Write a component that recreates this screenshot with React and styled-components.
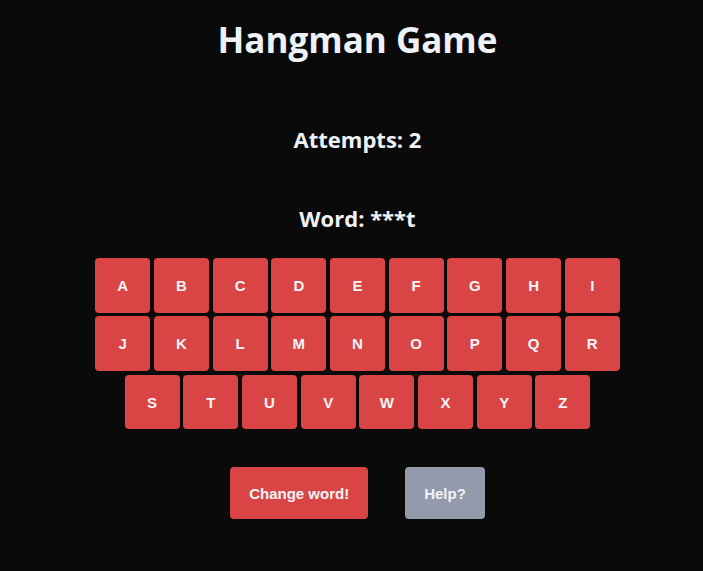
import React from "react";
import styled, { createGlobalStyle } from "styled-components";

const Global = createGlobalStyle`
  html, body {
    margin: 0;
    background: #0b0a0b;
  }
  #root {
    min-height: 571px;
  }
`;

const Page = styled.main`
  display: flex;
  flex-direction: column;
  align-items: center;
  padding-left: 12px;
  color: #eef2f7;
  font-family: "Open Sans", "Noto Sans", sans-serif;
`;

const Title = styled.h1`
  margin: 18px 0 0;
  font-size: 35px;
  line-height: 44px;
  font-weight: 700;
`;

const Info = styled.h2`
  margin: ${(p) => p.$top}px 0 0;
  font-size: 22px;
  line-height: 30px;
  font-weight: 700;
`;

const Keyboard = styled.div`
  display: flex;
  flex-direction: column;
  align-items: center;
  gap: 3.7px;
  margin-top: 25px;
`;

const KeyRow = styled.div`
  display: flex;
  gap: 3.7px;
`;

const Key = styled.button`
  width: 55px;
  height: 54.7px;
  border: none;
  border-radius: 4px;
  background: #d94545;
  color: #f4f4f6;
  font-family: "Liberation Sans", Arial, sans-serif;
  font-size: 15px;
  font-weight: 700;
  padding: 0;
  cursor: pointer;
`;

const Actions = styled.div`
  display: flex;
  gap: 37px;
  margin-top: 38px;
`;

const ActionButton = styled.button`
  height: 52px;
  padding: 0 19px;
  border: none;
  border-radius: 4px;
  background: ${(p) => (p.$muted ? "#929aac" : "#d94545")};
  color: #f4f4f6;
  font-family: "Liberation Sans", Arial, sans-serif;
  font-size: 15px;
  font-weight: 700;
  cursor: pointer;
`;

const rows = ["ABCDEFGHI", "JKLMNOPQR", "STUVWXYZ"];

export default function App() {
  return (
    <>
      <Global />
      <Page>
        <Title>Hangman Game</Title>
        <Info $top={62}>Attempts: 2</Info>
        <Info $top={49}>Word: ***t</Info>
        <Keyboard>
          {rows.map((row) => (
            <KeyRow key={row}>
              {row.split("").map((l) => (
                <Key key={l}>{l}</Key>
              ))}
            </KeyRow>
          ))}
        </Keyboard>
        <Actions>
          <ActionButton>Change word!</ActionButton>
          <ActionButton $muted>Help?</ActionButton>
        </Actions>
      </Page>
    </>
  );
}
